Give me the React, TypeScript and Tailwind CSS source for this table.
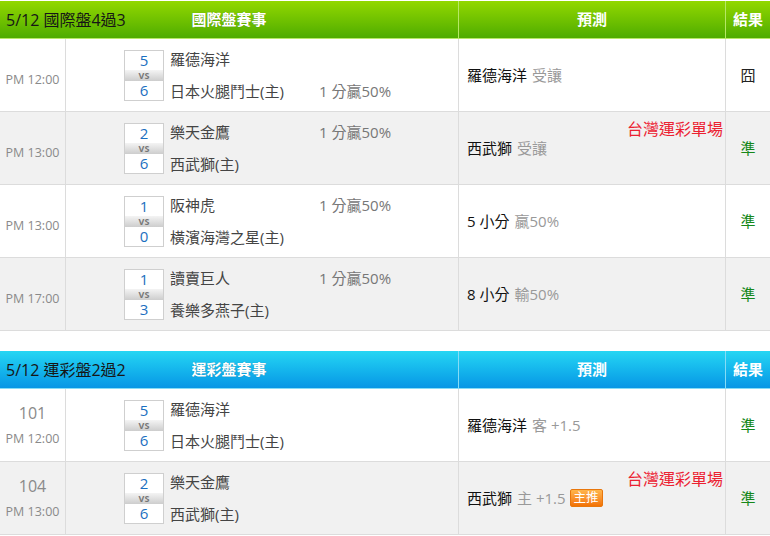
import React from "react";

type Row = {
  no?: string;
  time: string;
  away: string;
  home: string;
  as: string;
  hs: string;
  line?: string;
  lineOnHome?: boolean;
  pick: string;
  pickNote: string;
  badge?: boolean;
  tag?: boolean;
  result: string;
};

const intl: Row[] = [
  { time: "PM 12:00", away: "羅德海洋", home: "日本火腿鬥士(主)", as: "5", hs: "6", line: "1 分贏50%", lineOnHome: true, pick: "羅德海洋", pickNote: "受讓", result: "囧" },
  { time: "PM 13:00", away: "樂天金鷹", home: "西武獅(主)", as: "2", hs: "6", line: "1 分贏50%", pick: "西武獅", pickNote: "受讓", tag: true, result: "準" },
  { time: "PM 13:00", away: "阪神虎", home: "橫濱海灣之星(主)", as: "1", hs: "0", line: "1 分贏50%", pick: "5 小分", pickNote: "贏50%", result: "準" },
  { time: "PM 17:00", away: "讀賣巨人", home: "養樂多燕子(主)", as: "1", hs: "3", line: "1 分贏50%", pick: "8 小分", pickNote: "輸50%", result: "準" },
];

const sports: Row[] = [
  { no: "101", time: "PM 12:00", away: "羅德海洋", home: "日本火腿鬥士(主)", as: "5", hs: "6", pick: "羅德海洋", pickNote: "客 +1.5", result: "準" },
  { no: "104", time: "PM 13:00", away: "樂天金鷹", home: "西武獅(主)", as: "2", hs: "6", pick: "西武獅", pickNote: "主 +1.5", badge: true, tag: true, result: "準" },
];

const font = "font-['Open_Sans','Noto_Sans_CJK_TC',sans-serif]";

function ScoreBox({ a, b }: { a: string; b: string }) {
  return (
    <div className="w-[40px] border border-[#cfcfcf] flex flex-col bg-white">
      <div className="h-[19px] leading-[19px] text-center text-[15px] text-[#1b6fc0]">{a}</div>
      <div className="h-[11px] leading-[11px] text-center text-[9px] font-bold text-[#777] bg-gradient-to-b from-[#f4f4f4] to-[#cdcdcd]">VS</div>
      <div className="h-[19px] leading-[19px] text-center text-[15px] text-[#1b6fc0]">{b}</div>
    </div>
  );
}

function Table({ title, label, rows, head }: { title: string; label: string; rows: Row[]; head: "green" | "blue" }) {
  const headBg = head === "green" ? "bg-gradient-to-b from-[#92d800] to-[#4dac00]" : "bg-gradient-to-b from-[#26d6f3] to-[#0996e5]";
  const sep = head === "green" ? "border-[#b6e866]" : "border-[#86dcf6]";
  return (
    <div className="w-[770px]">
      <div className={`h-[38px] mt-px flex border-b ${sep} ${headBg}`}>
        <div className={`w-[459px] grid grid-cols-[1fr_auto_1fr] items-center border-r ${sep}`}>
          <span className="pl-[6px] text-[16px] text-[#161616]">{title}</span>
          <span className="text-[15px] font-bold text-white [text-shadow:0_0_1px_rgba(0,0,0,0.3)]">{label}</span>
          <span />
        </div>
        <div className={`w-[267px] flex items-center justify-center border-r ${sep} text-[15px] font-bold text-white`}>預測</div>
        <div className="w-[44px] flex items-center justify-center text-[15px] font-bold text-white">結果</div>
      </div>
      {rows.map((r, i) => (
        <div key={i} className={`h-[73px] flex border-b border-[#dcdcdc] ${i % 2 ? "bg-[#f1f1f1]" : "bg-white"}`}>
          <div className={`w-[66px] border-r border-[#dcdcdc] flex flex-col items-center justify-center text-[#8a8a8a] ${r.no ? "" : "pt-[10px]"}`}>
            {r.no && <span className="text-[16px] leading-[20px] mb-[8px]">{r.no}</span>}
            <span className="text-[12.5px] leading-[16px]">{r.time}</span>
          </div>
          <div className="w-[393px] border-r border-[#dcdcdc] flex items-center pl-[58px]">
            <ScoreBox a={r.as} b={r.hs} />
            <div className="ml-[6px] flex flex-col gap-[11px] text-[15px] text-[#444]">
              <div className="h-[21px] leading-[21px] flex">
                <span className="w-[149px]">{r.away}</span>
                {!r.lineOnHome && r.line && <span className="text-[#777]">{r.line}</span>}
              </div>
              <div className="h-[21px] leading-[21px] flex">
                <span className="w-[149px]">{r.home}</span>
                {r.lineOnHome && r.line && <span className="text-[#777]">{r.line}</span>}
              </div>
            </div>
          </div>
          <div className="w-[267px] border-r border-[#dcdcdc] relative flex items-center pl-[8px] text-[15px]">
            {r.tag && <span className="absolute right-[2px] top-[5px] text-[16px] text-[#ec2232]">台灣運彩單場</span>}
            <span className="text-[#111]">{r.pick}</span>
            <span className="ml-[5px] text-[#999]">{r.pickNote}</span>
            {r.badge && (
              <span className="ml-[4px] mt-[-1px] h-[18px] px-[3px] leading-[16px] text-[12.5px] text-white rounded-[2px] border border-[#e8770d] bg-gradient-to-b from-[#ffb54a] to-[#f27200]">主推</span>
            )}
          </div>
          <div className={`w-[44px] flex items-center justify-center text-[15px] ${r.result === "準" ? "text-[#16881a]" : "text-[#222]"}`}>{r.result}</div>
        </div>
      ))}
    </div>
  );
}

export default function App() {
  return (
    <div className={`w-[770px] h-[536px] bg-white overflow-hidden ${font}`}>
      <Table title="5/12 國際盤4過3" label="國際盤賽事" rows={intl} head="green" />
      <div className="h-[19px]" />
      <Table title="5/12 運彩盤2過2" label="運彩盤賽事" rows={sports} head="blue" />
    </div>
  );
}
